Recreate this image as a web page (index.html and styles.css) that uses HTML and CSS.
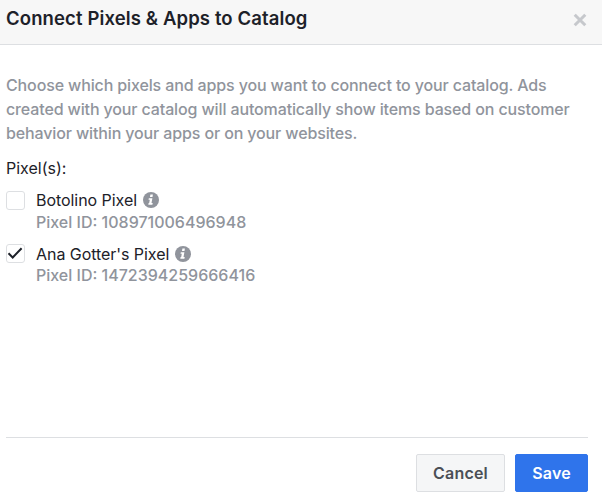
FILE: index.html
```html
<!DOCTYPE html>
<html lang="en">

<head>
    <meta charset="UTF-8">
    <meta name="viewport" content="width=device-width, initial-scale=1.0">
    <title>Connect Pixels &amp; Apps to Catalog</title>
    <link rel="stylesheet" href="styles.css">
</head>

<body>
    <div class="dialog">
        <div class="header">
            <h1>Connect Pixels &amp; Apps to Catalog</h1>
            <button type="button" class="close-button" aria-label="Close">
                <svg width="14" height="14" viewBox="0 0 14 14">
                    <path d="M1.7 1.7L12.3 12.3M12.3 1.7L1.7 12.3" />
                </svg>
            </button>
        </div>

        <div class="content">
            <p class="description">
                Choose which pixels and apps you want to connect to your catalog. Ads<br>
                created with your catalog will automatically show items based on customer<br>
                behavior within your apps or on your websites.
            </p>

            <h2>Pixel(s):</h2>

            <div class="pixel">
                <span class="checkbox"></span>
                <div class="pixel-info">
                    <div class="pixel-name">
                        <span>Botolino Pixel</span>
                        <svg class="info-icon" width="16" height="16" viewBox="0 0 16 16">
                            <circle cx="8" cy="8" r="8" />
                            <path d="M7.4 2.6h2.5l-.4 2.4H7zM5.8 6.2h3.6l-.9 4.8h1.2l-.3 1.8H5.3l.3-1.8h.6l.6-3.2H5.5z" />
                        </svg>
                    </div>
                    <div class="pixel-id">Pixel ID: 108971006496948</div>
                </div>
            </div>

            <div class="pixel">
                <span class="checkbox">
                    <svg width="17" height="17" viewBox="0 0 17 17">
                        <path d="M1.5 8.3L5.7 12.5L14.6 3.2" />
                    </svg>
                </span>
                <div class="pixel-info">
                    <div class="pixel-name">
                        <span>Ana Gotter's Pixel</span>
                        <svg class="info-icon" width="16" height="16" viewBox="0 0 16 16">
                            <circle cx="8" cy="8" r="8" />
                            <path d="M7.4 2.6h2.5l-.4 2.4H7zM5.8 6.2h3.6l-.9 4.8h1.2l-.3 1.8H5.3l.3-1.8h.6l.6-3.2H5.5z" />
                        </svg>
                    </div>
                    <div class="pixel-id">Pixel ID: 1472394259666416</div>
                </div>
            </div>
        </div>

        <div class="footer">
            <button type="button" class="button cancel-button">Cancel</button>
            <button type="button" class="button save-button">Save</button>
        </div>
    </div>
</body>
</html>
```
FILE: styles.css
```css
:root {
    --primary-color: #2f74eb;
    --text-color: #1d2129;
    --text-gray: #90949c;
    --border-color: #dddfe2;
}

* {
    box-sizing: border-box;
    margin: 0;
    padding: 0;
}

body {
    font-family: Inter, Roboto, Helvetica, Arial, sans-serif;
    font-size: 16px;
    color: var(--text-color);
    background-color: white;
}

.dialog {
    display: flex;
    flex-direction: column;
    height: 504px;
}

.header {
    display: flex;
    justify-content: space-between;
    height: 45px;
    padding: 6px 15px 0 6px;
    background-color: #f7f7f7;
    border-bottom: 1px solid var(--border-color);
}

.header h1 {
    font-size: 18.5px;
    font-weight: 600;
    line-height: 24px;
    letter-spacing: 0.12px;
    white-space: nowrap;
}

.close-button {
    height: 14px;
    margin-top: 7px;
    background: none;
    border: none;
}

.close-button svg {
    display: block;
    fill: none;
    stroke: #c6c8cc;
    stroke-width: 3;
}

.content {
    flex: 1;
    padding: 28px 6px 0;
}

.description {
    line-height: 24px;
    letter-spacing: -0.13px;
    font-weight: 450;
    color: var(--text-gray);
    white-space: nowrap;
}

.content h2 {
    margin-top: 11px;
    margin-bottom: 9px;
    font-size: 16px;
    font-weight: 400;
    line-height: 24px;
}

.pixel {
    display: flex;
    gap: 11px;
    height: 53px;
    line-height: 22px;
}

.checkbox {
    width: 19px;
    height: 19px;
    margin-top: 2px;
    border: 1px solid var(--border-color);
    border-radius: 3px;
}

.checkbox svg {
    display: block;
    fill: none;
    stroke: var(--text-color);
    stroke-width: 2;
}

.pixel-name {
    display: flex;
    align-items: center;
    gap: 6px;
    letter-spacing: -0.05px;
}

.pixel + .pixel .pixel-name {
    margin-top: 1px;
    margin-bottom: -1px;
}

.info-icon {
    fill: var(--text-gray);
}

.info-icon path {
    fill: white;
}

.pixel-id {
    font-weight: 450;
    color: var(--text-gray);
}

.footer {
    display: flex;
    justify-content: flex-end;
    gap: 10px;
    height: 67px;
    margin: 0 14px 0 6px;
    padding-top: 16px;
    border-top: 1px solid var(--border-color);
}

.button {
    height: 38px;
    border: 1px solid var(--primary-color);
    border-radius: 2px;
    font-family: inherit;
    font-size: 16px;
    font-weight: 600;
    letter-spacing: 0.2px;
}

.cancel-button {
    width: 89px;
    color: #4b4f56;
    background-color: #f5f6f7;
    border-color: var(--border-color);
}

.save-button {
    width: 73px;
    color: white;
    background-color: var(--primary-color);
}
```
